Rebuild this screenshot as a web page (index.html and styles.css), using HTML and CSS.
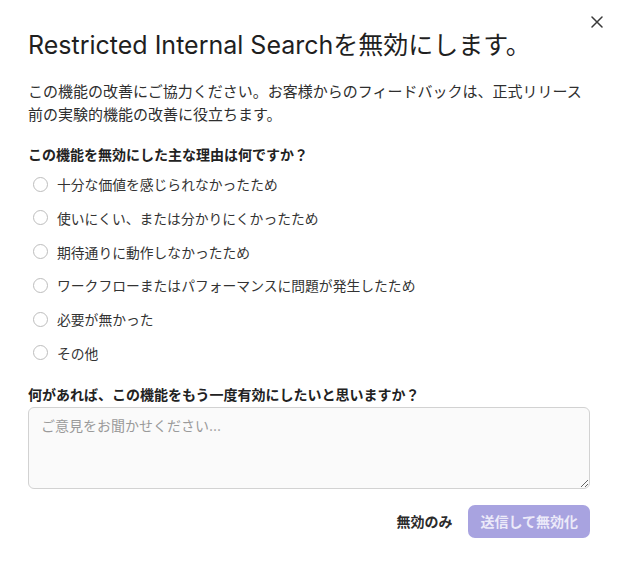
FILE: index.html
```html
<!DOCTYPE html>
<html lang="ja">
<head>
<meta charset="utf-8">
<link rel="stylesheet" href="styles.css">
</head>
<body>
<div class="dialog">
  <button class="close" aria-label="閉じる">
    <svg width="12" height="12" viewBox="0 0 12 12"><path d="M1 1L11 11M11 1L1 11" stroke="#3a3a3a" stroke-width="1.5" stroke-linecap="round"/></svg>
  </button>
  <h1 class="title">Restricted Internal Searchを無効にします。</h1>
  <p class="desc">この機能の改善にご協力ください。お客様からのフィードバックは、正式リリース前の実験的機能の改善に役立ちます。</p>
  <div class="question">この機能を無効にした主な理由は何ですか？</div>
  <div class="options">
    <label class="option"><span class="radio"></span><span>十分な価値を感じられなかったため</span></label>
    <label class="option"><span class="radio"></span><span>使いにくい、または分かりにくかったため</span></label>
    <label class="option"><span class="radio"></span><span>期待通りに動作しなかったため</span></label>
    <label class="option"><span class="radio"></span><span>ワークフローまたはパフォーマンスに問題が発生したため</span></label>
    <label class="option"><span class="radio"></span><span>必要が無かった</span></label>
    <label class="option"><span class="radio"></span><span>その他</span></label>
  </div>
  <div class="question q2">何があれば、この機能をもう一度有効にしたいと思いますか？</div>
  <textarea class="feedback" placeholder="ご意見をお聞かせください..."></textarea>
  <div class="actions">
    <button class="btn-link">無効のみ</button>
    <button class="btn-primary">送信して無効化</button>
  </div>
</div>
</body>
</html>
```

FILE: styles.css
```css
html, body {
  margin: 0;
  padding: 0;
  background: #ffffff;
}
body {
  font-family: Inter, "Noto Sans CJK JP", sans-serif;
  color: #2b2b2b;
}
.dialog {
  position: relative;
  width: 618px;
  height: 568px;
  box-sizing: border-box;
  padding: 31px 28px 0;
}
.close {
  position: absolute;
  top: 16px;
  right: 15px;
  width: 12px;
  height: 12px;
  padding: 0;
  border: none;
  background: none;
  display: flex;
}
.title {
  margin: 0;
  font-size: 25px;
  line-height: 29px;
  font-weight: 400;
  color: #1f1f1f;
}
.desc {
  margin: 20px 0 0;
  font-size: 15px;
  line-height: 23px;
  color: #2e2e2e;
}
.question {
  margin-top: 19px;
  font-size: 14px;
  line-height: 20px;
  font-weight: 700;
  color: #222;
}
.options {
  display: flex;
  flex-direction: column;
  gap: 13.8px;
  margin-top: 9px;
}
.option {
  display: flex;
  align-items: center;
  gap: 9px;
  height: 20px;
  font-size: 13.8px;
  color: #333;
  padding-left: 5px;
}
.radio {
  width: 13px;
  height: 13px;
  border: 1px solid #bdbdbd;
  border-radius: 50%;
  background: #fff;
  flex: none;
}
.q2 {
  margin-top: 22px;
  margin-bottom: 2px;
}
.feedback {
  display: block;
  width: 100%;
  height: 82px;
  box-sizing: border-box;
  border: 1px solid #d2d2d2;
  border-radius: 6px;
  background: #fafafa;
  padding: 9px 12px;
  font-family: inherit;
  font-size: 14px;
  line-height: 18px;
  resize: vertical;
  color: #333;
}
.feedback::placeholder {
  color: #9a9a9a;
}
.actions {
  display: flex;
  justify-content: flex-end;
  align-items: center;
  gap: 16px;
  margin-top: 16px;
}
.btn-link {
  border: none;
  background: none;
  padding: 0;
  font-family: inherit;
  font-size: 14px;
  font-weight: 700;
  color: #2b2b2b;
}
.btn-primary {
  border: none;
  background: #a8a3e0;
  color: #eceaf9;
  border-radius: 7px;
  height: 33px;
  padding: 0 12px;
  font-family: inherit;
  font-size: 14px;
  font-weight: 700;
}
```
